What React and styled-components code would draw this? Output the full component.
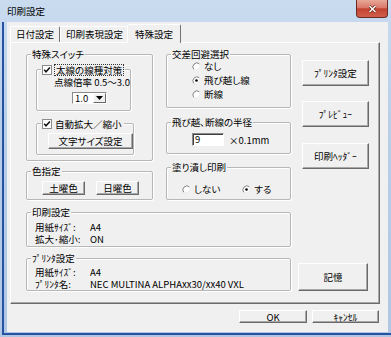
import React from "react";
import styled, { createGlobalStyle } from "styled-components";

const GlobalStyle = createGlobalStyle`
  html, body {
    margin: 0;
    padding: 0;
    background: #b9cfe8;
  }
  body {
    font-family: "Noto Sans CJK JP", "Noto Sans", sans-serif;
    font-size: 9.5px;
    font-feature-settings: "palt";
    color: #000;
  }
`;

const Window = styled.div`
  width: 391px;
  height: 337px;
  display: flex;
  flex-direction: column;
  background: linear-gradient(180deg, #c9dbef 0%, #b9cfe8 35%, #afc7e3 100%);
`;

const TitleBar = styled.div`
  height: 22px;
  flex-shrink: 0;
  display: flex;
  justify-content: space-between;
  align-items: flex-start;
  padding: 0 3px 0 7px;
`;

const TitleText = styled.span`
  line-height: 23px;
`;

const CloseButton = styled.div`
  width: 32px;
  height: 18px;
  box-sizing: border-box;
  border: 1px solid #6b2a22;
  border-top: none;
  border-radius: 0 0 4px 4px;
  background: linear-gradient(180deg, #e9a898 0%, #d9796a 45%, #c2432f 52%, #d0614d 100%);
  display: flex;
  align-items: center;
  justify-content: center;
`;

const Frame = styled.div`
  flex: 1;
  display: flex;
  margin: 0 0 2px 2px;
  border-left: 2px solid #2652a3;
  border-bottom: 2px solid #2652a3;
  padding: 0 3px 1px 3px;
`;

const Client = styled.div`
  flex: 1;
  display: flex;
  flex-direction: column;
  background: #f0f0f0;
  padding-left: 3px;
`;

const TabBar = styled.div`
  height: 20px;
  display: flex;
  align-items: flex-end;
`;

const Tab = styled.div`
  position: relative;
  z-index: ${p => (p.$active ? 1 : 0)};
  box-sizing: border-box;
  height: ${p => (p.$active ? 19 : 16)}px;
  margin: 0 ${p => (p.$active ? -2 : 0)}px ${p => (p.$active ? -1 : 0)}px;
  padding: ${p => (p.$active ? 2 : 0)}px ${p => (p.$active ? 7 : 5)}px 0;
  line-height: 15px;
  white-space: nowrap;
  background: #f0f0f0;
  border: 1px solid;
  border-bottom: none;
  border-color: #fff #747474 transparent #fff;
  border-radius: 2px 2px 0 0;
`;

const Panel = styled.div`
  box-sizing: border-box;
  width: 370px;
  height: 262px;
  padding: 11px 0 0 15px;
  border: 1px solid;
  border-color: #fff #6a6a6a #6a6a6a #fff;
  box-shadow: inset -1px -1px 0 #a8a8a8;
`;

const TopArea = styled.div`
  display: flex;
  align-items: flex-start;
`;

const Column = styled.div`
  width: ${p => p.$w}px;
  margin-left: ${p => p.$ml || 0}px;
  display: flex;
  flex-direction: column;
`;

const GroupBox = styled.div`
  box-sizing: border-box;
  height: ${p => p.$h}px;
  margin: ${p => p.$mt || 0}px ${p => p.$mr || 0}px 0 ${p => p.$ml || 0}px;
  border: 1px solid #b7b7b7;
  border-radius: 2px;
  box-shadow: inset 1px 1px 0 #fff, 1px 1px 0 #fff;
  display: flex;
  flex-direction: column;
  align-items: flex-start;
`;

const GroupTitle = styled.div`
  margin: -6px 0 0 4px;
  padding: 0 1px;
  line-height: 11px;
  background: #f0f0f0;
  white-space: nowrap;
`;

const CheckLegend = styled.div`
  display: flex;
  align-items: center;
  gap: 3px;
  margin: -6px 0 0 4px;
  padding: 0 2px 0 1px;
  height: 12px;
  background: #f0f0f0;
  white-space: nowrap;
`;

const FocusLabel = styled.span`
  line-height: 10px;
  padding: 0 1px;
  outline: 1px dotted #333;
  outline-offset: 0;
`;

const Line = styled.div`
  line-height: 12px;
  margin: ${p => p.$mt || 0}px 0 0 ${p => p.$ml || 0}px;
  white-space: nowrap;
`;

const Select = styled.div`
  box-sizing: border-box;
  display: flex;
  width: 35px;
  height: 12px;
  margin: 4px 0 0 35px;
  background: #fff;
  border: 1px solid;
  border-color: #8a8a8a #fff #fff #8a8a8a;
`;

const SelectValue = styled.span`
  flex: 1;
  line-height: 10px;
  padding-left: 2px;
`;

const SelectArrow = styled.span`
  box-sizing: border-box;
  width: 13px;
  display: flex;
  align-items: center;
  justify-content: center;
  background: #f0f0f0;
  border: 1px solid;
  border-color: #fff #6a6a6a #6a6a6a #fff;
`;

const Button = styled.button`
  box-sizing: border-box;
  width: ${p => p.$w}px;
  height: ${p => p.$h}px;
  margin: ${p => p.$mt || 0}px 0 0 ${p => p.$ml || 0}px;
  padding: 0;
  font: inherit;
  line-height: 10px;
  color: #000;
  white-space: nowrap;
  background: #f0f0f0;
  border: 1px solid;
  border-color: #fff #6a6a6a #6a6a6a #fff;
  box-shadow: inset -1px -1px 0 #a8a8a8;
`;

const ButtonRow = styled.div`
  display: flex;
  gap: ${p => p.$gap}px;
  margin: ${p => p.$mt}px 0 0 ${p => p.$ml}px;
`;

const RadioList = styled.div`
  display: flex;
  flex-direction: ${p => (p.$row ? "row" : "column")};
  gap: ${p => p.$gap || 0}px;
  margin: ${p => p.$mt}px 0 0 ${p => p.$ml}px;
`;

const RadioItem = styled.div`
  display: flex;
  align-items: center;
  gap: 3px;
  height: ${p => p.$h || 14}px;
  line-height: 12px;
  white-space: nowrap;
`;

const InputRow = styled.div`
  display: flex;
  align-items: center;
  gap: 5px;
  margin: 5px 0 0 25px;
  line-height: 12px;
  white-space: nowrap;
`;

const TextBox = styled.div`
  box-sizing: border-box;
  width: 32px;
  height: 13px;
  line-height: 11px;
  padding-left: 2px;
  background: #fff;
  border: 1px solid;
  border-color: #8a8a8a #fff #fff #8a8a8a;
  box-shadow: inset 1px 1px 0 #404040;
`;

const BottomArea = styled.div`
  display: grid;
  grid-template-columns: 265px 70px;
  column-gap: 7px;
  margin-top: 12px;
  align-items: end;
`;

const InfoGrid = styled.div`
  display: grid;
  grid-template-columns: 55px auto;
  line-height: 12px;
  margin: ${p => p.$mt}px 0 0 8px;
  white-space: nowrap;
`;

const Footer = styled.div`
  display: flex;
  justify-content: flex-end;
  gap: 5px;
  margin-top: 6px;
  padding-right: 9px;
`;

function CheckBox() {
  return (
    <svg width="10" height="10" viewBox="0 0 10 10">
      <rect x="0.5" y="0.5" width="9" height="9" fill="#fff" stroke="#8c8c8c" />
      <path d="M2.2 4.8 L4 6.8 L7.9 2.6" stroke="#111" strokeWidth="1.5" fill="none" />
    </svg>
  );
}

function Radio({ checked }) {
  return (
    <svg width="9" height="9" viewBox="0 0 9 9">
      <circle cx="4.5" cy="4.5" r="4" fill="#fff" />
      <path d="M1.7 7.3 A4 4 0 0 1 7.3 1.7" stroke="#7c7c7c" strokeWidth="1" fill="none" />
      <path d="M7.3 1.7 A4 4 0 0 1 1.7 7.3" stroke="#e4e4e4" strokeWidth="1" fill="none" />
      {checked && <circle cx="4.5" cy="4.5" r="1.3" fill="#000" />}
    </svg>
  );
}

function CheckGroup({ label, focused, h, mt, children }) {
  return (
    <GroupBox $h={h} $mt={mt} $ml={9} $mr={8}>
      <CheckLegend>
        <CheckBox />
        {focused ? <FocusLabel>{label}</FocusLabel> : <span>{label}</span>}
      </CheckLegend>
      {children}
    </GroupBox>
  );
}

export default function App() {
  return (
    <Window>
      <GlobalStyle />
      <TitleBar>
        <TitleText>印刷設定</TitleText>
        <CloseButton>
          <svg width="9" height="8" viewBox="0 0 9 8">
            <path d="M1.5 1 L7.5 7 M7.5 1 L1.5 7" stroke="#5a1a12" strokeWidth="2.6" />
            <path d="M1.5 1 L7.5 7 M7.5 1 L1.5 7" stroke="#fff" strokeWidth="1.5" />
          </svg>
        </CloseButton>
      </TitleBar>
      <Frame>
        <Client>
          <TabBar>
            <Tab>日付設定</Tab>
            <Tab>印刷表現設定</Tab>
            <Tab $active>特殊設定</Tab>
          </TabBar>
          <Panel>
            <TopArea>
              <Column $w={127}>
                <GroupBox $h={107}>
                  <GroupTitle>特殊スイッチ</GroupTitle>
                  <CheckGroup label="太線の線種対策" focused h={42} mt={9}>
                    <Line $ml={17}>点線倍率 0.5〜3.0</Line>
                    <Select>
                      <SelectValue>1.0</SelectValue>
                      <SelectArrow>
                        <svg width="7" height="4" viewBox="0 0 7 4">
                          <path d="M0 0 H7 L3.5 4 Z" fill="#000" />
                        </svg>
                      </SelectArrow>
                    </Select>
                  </CheckGroup>
                  <CheckGroup label="自動拡大／縮小" h={32} mt={12}>
                    <Button $w={85} $h={16} $mt={3} $ml={11}>文字サイズ設定</Button>
                  </CheckGroup>
                </GroupBox>
                <GroupBox $h={29} $mt={10}>
                  <GroupTitle>色指定</GroupTitle>
                  <ButtonRow $gap={11} $mt={4} $ml={15}>
                    <Button $w={43} $h={14}>土曜色</Button>
                    <Button $w={43} $h={14}>日曜色</Button>
                  </ButtonRow>
                </GroupBox>
              </Column>

              <Column $w={125} $ml={13}>
                <GroupBox $h={54}>
                  <GroupTitle>交差回避選択</GroupTitle>
                  <RadioList $mt={-1} $ml={25}>
                    <RadioItem><Radio />なし</RadioItem>
                    <RadioItem><Radio checked />飛び越し線</RadioItem>
                    <RadioItem><Radio />断線</RadioItem>
                  </RadioList>
                </GroupBox>
                <GroupBox $h={32} $mt={14}>
                  <GroupTitle>飛び越、断線の半径</GroupTitle>
                  <InputRow>
                    <TextBox>9</TextBox>
                    <span>×0.1mm</span>
                  </InputRow>
                </GroupBox>
                <GroupBox $h={33} $mt={13}>
                  <GroupTitle>塗り潰し印刷</GroupTitle>
                  <RadioList $row $gap={22} $mt={9} $ml={15}>
                    <RadioItem><Radio />しない</RadioItem>
                    <RadioItem><Radio checked />する</RadioItem>
                  </RadioList>
                </GroupBox>
              </Column>

              <Column $w={67} $ml={11}>
                <Button $w={67} $h={26} $mt={6}>ﾌﾟﾘﾝﾀ設定</Button>
                <Button $w={67} $h={26} $mt={15}>ﾌﾟﾚﾋﾞｭｰ</Button>
                <Button $w={67} $h={26} $mt={16}>印刷ﾍｯﾀﾞｰ</Button>
              </Column>
            </TopArea>

            <BottomArea>
              <GroupBox $h={35}>
                <GroupTitle>印刷設定</GroupTitle>
                <InfoGrid $mt={3}>
                  <span>用紙ｻｲｽﾞ:</span>
                  <span>A4</span>
                  <span>拡大･縮小:</span>
                  <span>ON</span>
                </InfoGrid>
              </GroupBox>
              <div />
              <GroupBox $h={33} $mt={11}>
                <GroupTitle>ﾌﾟﾘﾝﾀ設定</GroupTitle>
                <InfoGrid $mt={2}>
                  <span>用紙ｻｲｽﾞ:</span>
                  <span>A4</span>
                  <span>ﾌﾟﾘﾝﾀ名:</span>
                  <span>NEC MULTINA ALPHAxx30/xx40 VXL</span>
                </InfoGrid>
              </GroupBox>
              <Button $w={70} $h={28}>記憶</Button>
            </BottomArea>
          </Panel>
          <Footer>
            <Button $w={68} $h={13}>OK</Button>
            <Button $w={67} $h={13}>ｷｬﾝｾﾙ</Button>
          </Footer>
        </Client>
      </Frame>
    </Window>
  );
}
